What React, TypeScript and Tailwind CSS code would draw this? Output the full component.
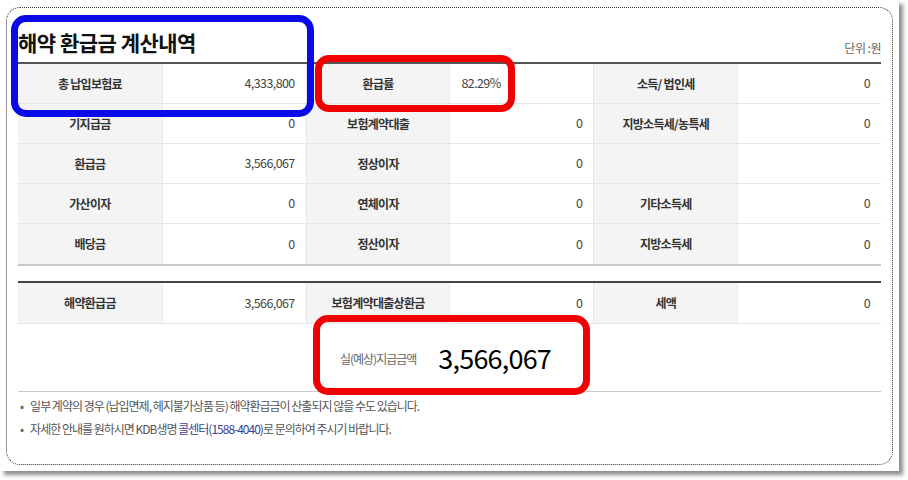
import React from "react";

type Cell = { label: string; value: string; align?: "left" | "right" };

const rows: Cell[][] = [
  [
    { label: "총 납입보험료", value: "4,333,800" },
    { label: "환급률", value: "82.29%", align: "left" },
    { label: "소득/ 법인세", value: "0" },
  ],
  [
    { label: "기지급금", value: "0" },
    { label: "보험계약대출", value: "0" },
    { label: "지방소득세/농특세", value: "0" },
  ],
  [
    { label: "환급금", value: "3,566,067" },
    { label: "정상이자", value: "0" },
    { label: "", value: "" },
  ],
  [
    { label: "가산이자", value: "0" },
    { label: "연체이자", value: "0" },
    { label: "기타소득세", value: "0" },
  ],
  [
    { label: "배당금", value: "0" },
    { label: "정산이자", value: "0" },
    { label: "지방소득세", value: "0" },
  ],
];

const summary: Cell[] = [
  { label: "해약환급금", value: "3,566,067" },
  { label: "보험계약대출상환금", value: "0" },
  { label: "세액", value: "0" },
];

const font = "font-['Noto_Sans_CJK_KR','Noto_Sans',sans-serif]";

const Row = ({ cells, last }: { cells: Cell[]; last?: boolean }) => (
  <div className={`grid grid-cols-6 h-[40px] ${last ? "" : "border-b border-[#e6e6e6]"}`}>
    {cells.map((c, i) => (
      <React.Fragment key={i}>
        <div
          className={`flex items-center justify-center bg-[#f4f4f4] text-[12px] font-bold text-[#333] tracking-[-0.7px] whitespace-pre ${
            i > 0 ? "border-l border-[#e6e6e6]" : ""
          }`}
        >
          {c.label}
        </div>
        <div
          className={`flex items-center bg-white text-[12.5px] text-[#444] tracking-[-0.6px] px-[11px] border-l border-[#ececec] ${
            c.align === "left" ? "justify-start" : "justify-end"
          }`}
        >
          {c.value}
        </div>
      </React.Fragment>
    ))}
  </div>
);

export default function App() {
  return (
    <div className={`w-[908px] h-[480px] bg-white ${font}`}>
      <div className="relative w-[899px] h-[471px] bg-white shadow-[4px_4px_4px_rgba(0,0,0,0.45)] pt-[7px] pl-[6px]">
        <div className="w-[887px] h-[458px] border border-dotted border-[#333] rounded-[14px] px-[11px]">
          <div className="h-[54px] flex items-end justify-between pb-[6px]">
            <h2 className="text-[21px] leading-[28px] font-bold text-[#111] tracking-[-0.5px]">
              해약 환급금 계산내역
            </h2>
            <span className="text-[12px] leading-[16px] text-[#666] tracking-[-0.5px]">단위 :원</span>
          </div>

          <div className="border-t-2 border-[#555] border-b-2 border-b-[#c8c8c8]">
            {rows.map((r, i) => (
              <Row key={i} cells={r} last={i === rows.length - 1} />
            ))}
          </div>

          <div className="mt-[15px] border-t-2 border-[#444]">
            <div className="border-b border-[#e6e6e6]">
              <Row cells={summary} last />
            </div>
            <div className="h-[68px] flex items-center justify-center gap-[22px] border-b border-[#c8c8c8] pt-[2px] pr-[8px]">
              <span className="text-[12px] text-[#666] tracking-[-1px]">실(예상)지급금액</span>
              <span className="text-[27px] font-normal text-black tracking-[-0.8px]">3,566,067</span>
            </div>
          </div>

          <ul className="mt-[2px] text-[12px] text-[#555] tracking-[-1px]">
            <li className="h-[23px] flex items-center gap-[7px] pl-[2px]">
              <span className="text-[#666]">•</span>
              <span>일부 계약의 경우 (납입면제, 헤지불가상품 등) 해약환급금이 산출되지 않을 수도 있습니다.</span>
            </li>
            <li className="h-[23px] flex items-center gap-[7px] pl-[2px]">
              <span className="text-[#666]">•</span>
              <span>
                자세한 안내를 원하시면 KDB생명 <span className="text-[#3b3f8f]">콜센터(1588-4040)</span>로 문의하여 주시기 바랍니다.
              </span>
            </li>
          </ul>
        </div>

        {/* annotation boxes */}
        <div className="absolute left-[11px] top-[15px] w-[303px] h-[102px] border-[7px] border-[#0a0ae6] rounded-[15px]" />
        <div className="absolute left-[315px] top-[55px] w-[200px] h-[57px] border-[7px] border-[#f00000] rounded-[14px]" />
        <div className="absolute left-[313px] top-[315px] w-[277px] h-[80px] border-[7px] border-[#f00000] rounded-[15px]" />
      </div>
    </div>
  );
}
